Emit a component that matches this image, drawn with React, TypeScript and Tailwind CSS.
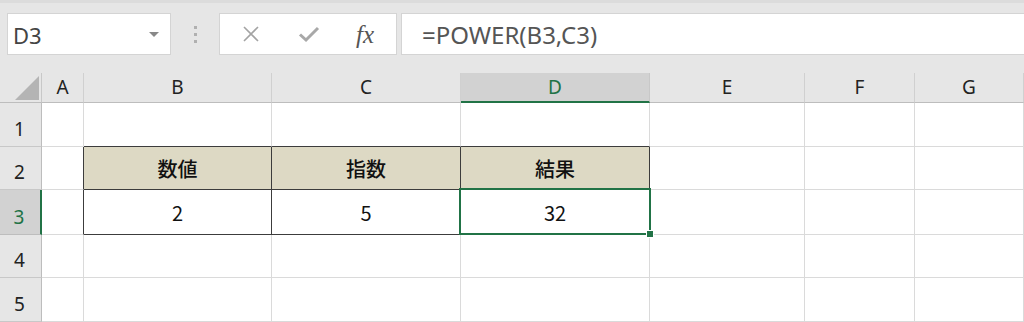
import React from "react";

const cols = [
  { key: "corner", w: "w-[42px]" },
  { key: "A", w: "w-[42px]" },
  { key: "B", w: "w-[188px]" },
  { key: "C", w: "w-[189px]" },
  { key: "D", w: "w-[189px]" },
  { key: "E", w: "w-[155px]" },
  { key: "F", w: "w-[110px]" },
  { key: "G", w: "flex-1" },
];

const rows = [
  { n: 1, h: "h-[44px]" },
  { n: 2, h: "h-[43px]" },
  { n: 3, h: "h-[45px]" },
  { n: 4, h: "h-[43px]" },
  { n: 5, h: "h-[44px]" },
];

const values: Record<string, string> = {
  B2: "数値",
  C2: "指数",
  D2: "結果",
  B3: "2",
  C3: "5",
  D3: "32",
};

const inTable = (col: string, row: number) =>
  ["B", "C", "D"].includes(col) && (row === 2 || row === 3);

const cellBorders = (col: string, row: number) => {
  const next = cols[cols.findIndex((c) => c.key === col) + 1]?.key;
  const rightDark = inTable(col, row) || (next && inTable(next, row));
  const bottomDark = inTable(col, row) || inTable(col, row + 1);
  return `${rightDark ? "border-r-[#3c3c3c]" : "border-r-[#dadada]"} ${
    bottomDark ? "border-b-[#3c3c3c]" : "border-b-[#dadada]"
  }`;
};

const Toolbar = () => (
  <div className="h-[73px] bg-[#e6e6e6] border-t-[3px] border-[#dcdcdc] flex items-start pt-[10px] pl-[7px]">
    <div className="w-[164px] h-[42px] bg-white border border-[#d4d4d4] flex items-center justify-between pl-[5px] pr-[11px]">
      <span className="text-[22px] text-[#444] leading-none pt-[2px]">D3</span>
      <span className="w-0 h-0 border-l-[5px] border-r-[5px] border-t-[5px] border-l-transparent border-r-transparent border-t-[#888]" />
    </div>
    <div className="w-[48px] h-[42px] flex flex-col items-center justify-center gap-[4px]">
      <span className="w-[3px] h-[3px] bg-[#b0b0b0]" />
      <span className="w-[3px] h-[3px] bg-[#b0b0b0]" />
      <span className="w-[3px] h-[3px] bg-[#b0b0b0]" />
    </div>
    <div className="w-[178px] h-[42px] bg-white border border-[#d4d4d4] flex items-center">
      <svg className="ml-[22px]" width="18" height="18" viewBox="0 0 18 18">
        <path d="M2 2 L16 16 M16 2 L2 16" stroke="#a3a3a3" strokeWidth="1.6" fill="none" />
      </svg>
      <svg className="ml-[38px]" width="22" height="18" viewBox="0 0 22 18">
        <path d="M2 9.5 L8 15 L20 3" stroke="#a8a8a8" strokeWidth="3" fill="none" />
      </svg>
      <span
        className="ml-[36px] text-[25px] italic text-[#555] leading-none"
        style={{ fontFamily: '"Liberation Serif", serif' }}
      >
        fx
      </span>
    </div>
    <div className="flex-1 ml-[4px] h-[42px] bg-white border-y border-l border-[#d4d4d4] flex items-center pl-[20px]">
      <span className="text-[24px] text-[#555] leading-none pt-[1px]">=POWER(B3,C3)</span>
    </div>
  </div>
);

const HeaderRow = () => (
  <div className="flex h-[30px] bg-[#e6e6e6]">
    {cols.map((c) =>
      c.key === "corner" ? (
        <div key={c.key} className={`${c.w} border-r border-[#c8c8c8] border-b border-b-[#bdbdbd] relative`}>
          <svg className="absolute left-[15px] top-[3px]" width="24" height="24" viewBox="0 0 24 24">
            <path d="M24 0 L24 24 L0 24 Z" fill="#b4b4b4" />
          </svg>
        </div>
      ) : c.key === "D" ? (
        <div
          key={c.key}
          className={`${c.w} bg-[#d2d2d2] border-r border-[#c8c8c8] border-b-[2px] border-b-[#217346] flex items-center justify-center text-[19px] text-[#217346]`}
        >
          {c.key}
        </div>
      ) : (
        <div
          key={c.key}
          className={`${c.w} border-r border-[#d0d0d0] border-b border-b-[#bdbdbd] flex items-center justify-center text-[19px] text-[#222]`}
        >
          {c.key}
        </div>
      )
    )}
  </div>
);

const App = () => {
  return (
    <div
      className="w-[1024px] h-[322px] overflow-hidden bg-white"
      style={{ fontFamily: '"Noto Sans", "Noto Sans CJK JP", sans-serif' }}
    >
      <Toolbar />
      <HeaderRow />
      {rows.map((r) => (
        <div key={r.n} className={`flex ${r.h}`}>
          {cols.map((c) => {
            if (c.key === "corner") {
              return r.n === 3 ? (
                <div
                  key={c.key}
                  className={`${c.w} bg-[#d2d2d2] border-r-[2px] border-r-[#217346] border-b border-b-[#bdbdbd] flex items-end justify-center pb-[3px] pr-[2px] text-[19px] text-[#217346]`}
                >
                  {r.n}
                </div>
              ) : (
                <div
                  key={c.key}
                  className={`${c.w} bg-[#e6e6e6] border-r border-r-[#bdbdbd] border-b border-b-[#c8c8c8] flex items-end justify-center pb-[3px] pr-[2px] text-[19px] text-[#222]`}
                >
                  {r.n}
                </div>
              );
            }
            const id = `${c.key}${r.n}`;
            const fill = r.n === 2 && inTable(c.key, r.n) ? "bg-[#ddd9c4]" : "bg-white";
            const weight = r.n === 2 ? "font-medium" : "font-normal";
            return (
              <div
                key={c.key}
                className={`${c.w} ${fill} ${weight} relative border-r border-b ${cellBorders(c.key, r.n)} flex items-center justify-center text-[20px] text-[#111]`}
                style={{ fontFamily: '"Noto Sans CJK JP", sans-serif' }}
              >
                {values[id] && <span className="pt-[2px]">{values[id]}</span>}
                {id === "D3" && (
                  <>
                    <span className="absolute z-10 -left-[2px] -top-[2px] -right-[2px] -bottom-[1px] border-[2px] border-[#217346] pointer-events-none" />
                    <span className="absolute z-20 -right-[5px] -bottom-[4px] w-[8px] h-[8px] bg-[#217346] border border-white" />
                  </>
                )}
              </div>
            );
          })}
        </div>
      ))}
    </div>
  );
};

export default App;
